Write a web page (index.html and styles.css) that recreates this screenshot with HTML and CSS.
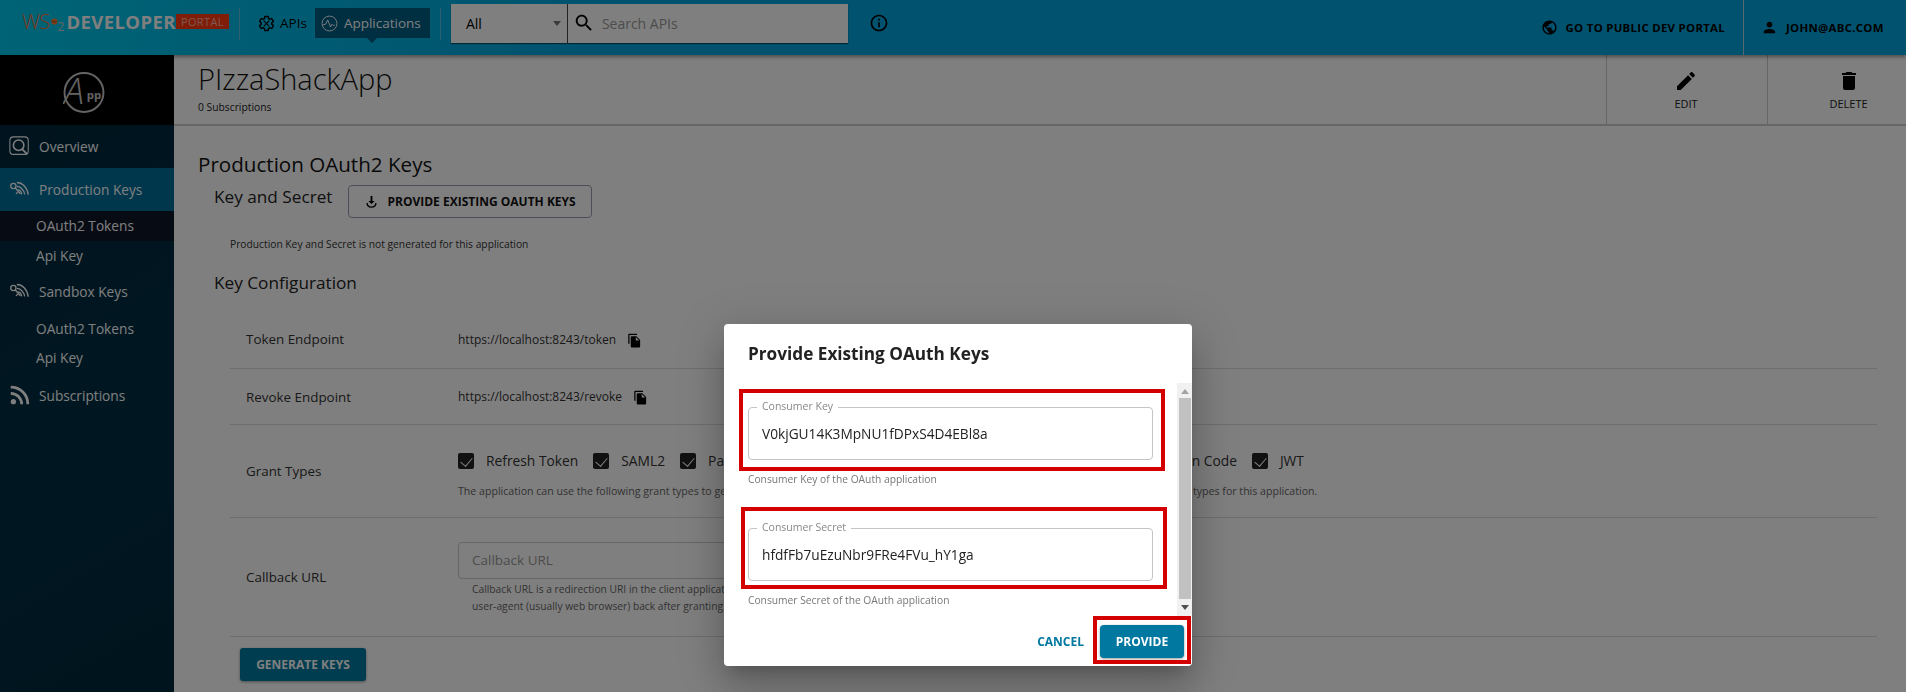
FILE: index.html
```html
<!DOCTYPE html>
<html lang="en">
<head>
    <meta charset="UTF-8">
    <title>PIzzaShackApp</title>
    <link rel="stylesheet" href="styles.css">
</head>
<body>
<header class="topbar">
    <div class="logo">
        <span class="logo-wso">WS</span>
        <svg class="logo-o" viewBox="0 0 20 20"><circle cx="10" cy="10" r="9" fill="#ff7a30"/><path d="M3 10.500h4l1.500-3 2.500 6 1.500-3h4.500" fill="none" stroke="#222" stroke-width="1"/></svg>
        <span class="logo-two">2</span>
        <span class="logo-dev">DEVELOPER</span>
        <span class="logo-portal">PORTAL</span>
    </div>
    <div class="top-sep"></div>
    <a class="nav-link">
        <svg class="nav-icon" viewBox="0 0 24 24"><path d="M19.430 12.980c.04-.32.07-.64.07-.98s-.03-.66-.07-.98l2.110-1.650c.19-.15.24-.42.12-.64l-2-3.460c-.12-.22-.39-.3-.61-.22l-2.490 1c-.52-.4-1.080-.73-1.690-.98l-.38-2.650C14.460 2.180 14.250 2 14 2h-4c-.25 0-.46.18-.49.42l-.38 2.650c-.61.25-1.170.59-1.690.98l-2.490-1c-.23-.09-.49 0-.61.22l-2 3.460c-.13.22-.07.49.12.64l2.110 1.650c-.04.32-.07.65-.07.98s.03.66.07.98l-2.110 1.650c-.19.15-.24.42-.12.64l2 3.460c.12.22.39.3.61.22l2.490-1c.52.4 1.080.73 1.690.98l.38 2.650c.03.24.24.42.49.42h4c.25 0 .46-.18.49-.42l.38-2.650c.61-.25 1.170-.59 1.690-.98l2.490 1c.23.09.49 0 .61-.22l2-3.460c.12-.22.07-.49-.12-.64l-2.110-1.650z" fill="none" stroke="#000" stroke-width="2"/><path d="M8 8l8 8M16 8l-8 8" stroke="#000" stroke-width="1.500"/></svg>
        APIs
    </a>
    <a class="nav-link nav-active">
        <svg class="nav-icon" viewBox="0 0 24 24"><circle cx="12" cy="12" r="10.500" fill="none" stroke="#fff" stroke-width="1.300"/><path d="M2.500 14l4-1 3-6 4 10 2-4 2 2 2-1" fill="none" stroke="#fff" stroke-width="1.300"/></svg>
        Applications
    </a>
    <div class="top-sep top-sep-right"></div>
    <div class="search">
        <div class="search-select">All<span class="caret"></span></div>
        <div class="search-input">
            <svg class="search-icon" viewBox="0 0 24 24"><path d="M15.500 14h-.79l-.28-.27C15.410 12.590 16 11.110 16 9.500 16 5.910 13.090 3 9.500 3S3 5.910 3 9.500 5.910 16 9.500 16c1.610 0 3.090-.59 4.230-1.570l.27.28v.79l5 4.990L20.490 19l-4.990-5zm-6 0C7.010 14 5 11.990 5 9.500S7.010 5 9.500 5 14 7.010 14 9.500 11.990 14 9.500 14z"/></svg>
            <span class="search-placeholder">Search APIs</span>
        </div>
    </div>
    <svg class="info-icon" viewBox="0 0 24 24"><path d="M11 7h2v2h-2zm0 4h2v6h-2zm1-9C6.480 2 2 6.480 2 12s4.480 10 10 10 10-4.480 10-10S17.520 2 12 2zm0 18c-4.410 0-8-3.590-8-8s3.590-8 8-8 8 3.590 8 8-3.590 8-8 8z"/></svg>
    <a class="top-action top-public">
        <svg class="top-action-icon" viewBox="0 0 24 24"><path d="M12 2C6.480 2 2 6.480 2 12s4.480 10 10 10 10-4.480 10-10S17.520 2 12 2zm-1 17.930c-3.950-.49-7-3.850-7-7.930 0-.62.08-1.210.21-1.790L9 15v1c0 1.100.9 2 2 2v1.930zm6.900-2.540c-.26-.81-1-1.390-1.900-1.390h-1v-3c0-.55-.45-1-1-1H8v-2h2c.55 0 1-.45 1-1V7h2c1.100 0 2-.9 2-2v-.41c2.930 1.190 5 4.060 5 7.410 0 2.080-.8 3.970-2.100 5.390z"/></svg>
        GO TO PUBLIC DEV PORTAL
    </a>
    <a class="top-action top-user">
        <svg class="top-action-icon" viewBox="0 0 24 24"><path d="M12 12c2.210 0 4-1.790 4-4s-1.790-4-4-4-4 1.790-4 4 1.790 4 4 4zm0 2c-2.670 0-8 1.340-8 4v2h16v-2c0-2.660-5.330-4-8-4z"/></svg>
        JOHN@ABC.COM
    </a>
</header>

<div class="layout">
    <aside class="sidebar">
        <div class="avatar">
            <svg class="avatar-svg" viewBox="0 -8 44 60"><circle cx="22" cy="22" r="20.500" fill="none" stroke="#c8c8c8" stroke-width="2"/><text x="1" y="34" class="avatar-a">A</text><text x="25" y="29" class="avatar-pp">pp</text></svg>
        </div>
        <a class="side-item side-overview">
            <svg class="side-icon" viewBox="0 0 24 24"><rect x="1" y="1" width="21" height="20" rx="4" fill="none" stroke="#fff" stroke-width="1.200"/><circle cx="11" cy="10.500" r="6" fill="none" stroke="#fff" stroke-width="1.800"/><path d="M15 15l6 6" stroke="#fff" stroke-width="2"/></svg>
            Overview
        </a>
        <a class="side-item side-active">
            <svg class="side-icon" viewBox="0 0 24 24"><circle cx="5" cy="8" r="3" fill="none" stroke="#fff" stroke-width="1.500"/><path d="M7 10l6 7M10 15l-2 2" stroke="#fff" stroke-width="1.600"/><path d="M9 4c6 0 12 5 13 14M9 8.500c4 0 8 4 9 9M10 12.500c2 0 4 2 4.500 5" fill="none" stroke="#fff" stroke-width="1.500"/></svg>
            Production Keys
        </a>
        <a class="side-sub side-sub-active">OAuth2 Tokens</a>
        <a class="side-sub">Api Key</a>
        <a class="side-item side-sandbox">
            <svg class="side-icon" viewBox="0 0 24 24"><circle cx="5" cy="8" r="3" fill="none" stroke="#fff" stroke-width="1.500"/><path d="M7 10l6 7M10 15l-2 2" stroke="#fff" stroke-width="1.600"/><path d="M9 4c6 0 12 5 13 14M9 8.500c4 0 8 4 9 9M10 12.500c2 0 4 2 4.500 5" fill="none" stroke="#fff" stroke-width="1.500"/></svg>
            Sandbox Keys
        </a>
        <a class="side-sub side-sub-tall">OAuth2 Tokens</a>
        <a class="side-sub side-sub-short">Api Key</a>
        <a class="side-item side-subs">
            <svg class="side-icon" viewBox="0 0 24 24"><circle cx="5" cy="19" r="3"/><path d="M2 2.500c11 0 19.500 8.500 19.500 19.500M2 9.500c7 0 12.500 5.500 12.500 12.500" fill="none" stroke="#fff" stroke-width="3.200"/></svg>
            Subscriptions
        </a>
    </aside>

    <main class="main">
        <div class="title-bar">
            <div class="title-text">
                <h1 class="app-name">PIzzaShackApp</h1>
                <div class="app-subs">0 Subscriptions</div>
            </div>
            <a class="title-action">
                <svg class="title-icon" viewBox="0 0 24 24"><path d="M3 17.250V21h3.750L17.810 9.940l-3.750-3.750L3 17.250zM20.710 7.040c.39-.39.39-1.020 0-1.410l-2.340-2.340c-.39-.39-1.020-.39-1.410 0l-1.830 1.830 3.750 3.750 1.830-1.830z"/></svg>
                EDIT
            </a>
            <a class="title-action title-delete">
                <svg class="title-icon" viewBox="0 0 24 24"><path d="M6 19c0 1.100.9 2 2 2h8c1.100 0 2-.9 2-2V7H6v12zM19 4h-3.500l-1-1h-5l-1 1H5v2h14V4z"/></svg>
                DELETE
            </a>
        </div>

        <div class="content">
            <h2 class="page-heading">Production OAuth2 Keys</h2>
            <div class="key-head">
                <h3 class="sub-heading">Key and Secret</h3>
                <a class="outline-btn">
                    <svg class="outline-btn-icon" viewBox="0 0 24 24"><path d="M10.500 3h3v8h3.500L12 16 7 11h3.500z"/><path d="M5 14.500c0 4 3 6.500 7 6.500s7-2.500 7-6.500" fill="none" stroke="#000" stroke-width="2.200"/></svg>
                    PROVIDE EXISTING OAUTH KEYS
                </a>
            </div>
            <p class="key-note">Production Key and Secret is not generated for this application</p>
            <h3 class="sub-heading config-heading">Key Configuration</h3>

            <div class="config-row row-token">
                <div class="row-label">Token Endpoint</div>
                <div class="row-value">https://localhost:8243/token
                    <svg class="copy-icon" viewBox="0 0 24 24"><path d="M16 1H4c-1.100 0-2 .9-2 2v14h2V3h12V1zm-1 4l6 6v10c0 1.100-.9 2-2 2H7.990C6.890 23 6 22.100 6 21l.01-14c0-1.100.89-2 1.990-2h7zm-1 7h5.500L14 6.500V12z"/></svg>
                </div>
            </div>
            <div class="config-row row-revoke">
                <div class="row-label">Revoke Endpoint</div>
                <div class="row-value">https://localhost:8243/revoke
                    <svg class="copy-icon" viewBox="0 0 24 24"><path d="M16 1H4c-1.100 0-2 .9-2 2v14h2V3h12V1zm-1 4l6 6v10c0 1.100-.9 2-2 2H7.990C6.890 23 6 22.100 6 21l.01-14c0-1.100.89-2 1.990-2h7zm-1 7h5.500L14 6.500V12z"/></svg>
                </div>
            </div>
            <div class="config-row row-grants">
                <div class="row-label">Grant Types</div>
                <div class="grant-cell">
                    <div class="grant-list">
                        <label class="grant"><span class="check"></span>Refresh Token</label>
                        <label class="grant"><span class="check"></span>SAML2</label>
                        <label class="grant"><span class="check"></span>Password</label>
                        <label class="grant"><span class="check"></span>Client Credentials</label>
                        <label class="grant"><span class="check"></span>IWA-NTLM</label>
                        <label class="grant"><span class="check"></span>Authorization Code</label>
                        <label class="grant"><span class="check"></span>JWT</label>
                    </div>
                    <p class="hint">The application can use the following grant types to generate Access Tokens. Based on the application requirements, you can enable or disable grant types for this application.</p>
                </div>
            </div>
            <div class="config-row row-callback">
                <div class="row-label">Callback URL</div>
                <div>
                    <div class="callback-input">Callback URL</div>
                    <p class="hint callback-hint">Callback URL is a redirection URI in the client application which is used by the authorization server to send the client's<br>user-agent (usually web browser) back after granting access.</p>
                </div>
            </div>
            <a class="generate-btn">GENERATE KEYS</a>
        </div>
    </main>
</div>

<div class="backdrop"></div>

<div class="modal">
    <h2 class="modal-title">Provide Existing OAuth Keys</h2>
    <div class="modal-body">
        <div class="modal-fields">
            <div class="field">
                <div class="field-box">
                    <span class="field-label">Consumer Key</span>
                    V0kjGU14K3MpNU1fDPxS4D4EBl8a
                </div>
                <div class="mark mark-key"></div>
                <p class="field-help">Consumer Key of the OAuth application</p>
            </div>
            <div class="field">
                <div class="field-box">
                    <span class="field-label">Consumer Secret</span>
                    hfdfFb7uEzuNbr9FRe4FVu_hY1ga
                </div>
                <div class="mark mark-secret"></div>
                <p class="field-help">Consumer Secret of the OAuth application</p>
            </div>
        </div>
        <div class="scrollbar">
            <span class="scroll-up"></span>
            <span class="scroll-thumb"></span>
            <span class="scroll-down"></span>
        </div>
    </div>
    <div class="modal-actions">
        <a class="cancel-btn">CANCEL</a>
        <a class="provide-btn">PROVIDE<span class="mark mark-provide"></span></a>
    </div>
</div>
</body>
</html>
```

FILE: styles.css
```css
* {
    margin: 0;
    padding: 0;
    box-sizing: border-box;
}

html, body {
    height: 692px;
    overflow: hidden;
}

body {
    font-family: "Open Sans", "Liberation Sans", sans-serif;
    color: #222222;
    background: #ffffff;
}

/* top bar */
.topbar {
    display: flex;
    align-items: center;
    height: 55px;
    padding-left: 22px;
    background: linear-gradient(100deg, #00c8ec 0%, #00a4dc 32%);
    box-shadow: 0 2px 4px rgba(0, 0, 0, .4);
    color: #000000;
    position: relative;
}

.logo {
    display: flex;
    align-items: center;
    width: 207px;
    height: 20px;
    margin-top: -12px;
}

.logo-wso {
    font-size: 20px;
    font-weight: 300;
    color: #ff6a30;
    letter-spacing: -.5px;
}

.logo-o {
    width: 15px;
    height: 15px;
    margin-left: 1px;
}

.logo-two {
    font-size: 12px;
    color: #cccccc;
    margin: 10px 2px 0 0;
}

.logo-dev {
    font-size: 18.500px;
    font-weight: 700;
    color: #ffffff;
    letter-spacing: .4px;
}

.logo-portal {
    background: #ff3a10;
    color: #ffb0a0;
    font-size: 11px;
    padding: 0 5px;
    line-height: 15px;
    flex: 1;
    text-align: center;
    letter-spacing: .4px;
}

.top-sep {
    width: 1px;
    height: 32px;
    margin: -8px 18px 0 10px;
    background: #9fc9d8;
    opacity: .6;
}

.top-sep-right {
    margin: -8px 10px 0 10px;
}

.nav-link {
    display: flex;
    align-items: center;
    gap: 5px;
    height: 30px;
    font-size: 13.500px;
    margin-top: -9px;
}

.nav-icon {
    width: 17px;
    height: 17px;
}

.nav-active {
    position: relative;
    width: 115px;
    margin-left: 8px;
    padding-left: 6px;
    gap: 6px;
    color: #ffffff;
    background: #005e84;
}

.nav-active::after {
    content: "";
    position: absolute;
    left: 50%;
    bottom: -5px;
    margin-left: -5px;
    border-left: 5px solid transparent;
    border-right: 5px solid transparent;
    border-top: 5px solid #005e84;
}

.search {
    display: flex;
    width: 397px;
    height: 39px;
    margin-top: -9px;
    background: #ffffff;
    box-shadow: 0 1px 1px rgba(0, 0, 0, .5);
}

.search-select {
    position: relative;
    width: 117px;
    padding-left: 15px;
    line-height: 39px;
    font-size: 14px;
    border-right: 1px solid #444444;
}

.caret {
    position: absolute;
    right: 6px;
    top: 17px;
    border-left: 4px solid transparent;
    border-right: 4px solid transparent;
    border-top: 5px solid #777777;
}

.search-input {
    display: flex;
    align-items: center;
    padding-left: 5px;
}

.search-icon {
    width: 22px;
    height: 22px;
    margin-right: 7px;
}

.search-placeholder {
    font-size: 14px;
    color: #999999;
}

.info-icon {
    width: 20px;
    height: 20px;
    margin: -9px 0 0 21px;
}

.top-action {
    display: flex;
    align-items: center;
    height: 55px;
    font-size: 11.400px;
    font-weight: 700;
    letter-spacing: .3px;
}

.top-action-icon {
    width: 17px;
    height: 17px;
    margin-right: 8px;
}

.top-public {
    margin-left: auto;
    padding-right: 18px;
    border-right: 1px solid #b0d0dc;
}

.top-user {
    width: 162px;
    padding-left: 17px;
}

/* sidebar */
.layout {
    display: flex;
    height: 637px;
}

.sidebar {
    width: 174px;
    flex-shrink: 0;
    background: linear-gradient(150deg, #00263a 0%, #002e44 60%, #00283a 100%);
    color: #ffffff;
    font-size: 13.700px;
}

.avatar {
    display: flex;
    align-items: center;
    justify-content: center;
    height: 70px;
    padding: 5px 6px 0 0;
    background: #000000;
}

.avatar-svg {
    width: 42px;
    height: 57px;
}

.avatar-a {
    font-size: 38px;
    font-weight: 300;
    font-style: italic;
    fill: #c8c8c8;
}

.avatar-pp {
    font-size: 12px;
    font-weight: 700;
    fill: #c8c8c8;
}

.side-item {
    display: flex;
    align-items: center;
    height: 43px;
    padding-left: 9px;
}

.side-icon {
    width: 21px;
    height: 21px;
    margin-right: 9px;
    fill: #ffffff;
}

.side-active {
    background: #006e9a;
}

.side-sandbox {
    height: 41px;
}

.side-sub {
    display: flex;
    align-items: center;
    height: 30px;
    padding: 0 0 2px 36px;
}

.side-sub-active {
    background: #0e1628;
}

.side-sub-tall {
    height: 34px;
}

.side-sub-short {
    height: 24px;
}

.side-subs {
    height: 50px;
}

/* title */
.main {
    flex: 1;
    min-width: 0;
}

.title-bar {
    display: flex;
    height: 71px;
    border-bottom: 2px solid #cccccc;
}

.title-text {
    flex: 1;
    padding: 4px 0 0 24px;
}

.app-name {
    font-size: 29px;
    font-weight: 300;
    line-height: 40px;
    color: #111111;
}

.app-subs {
    font-size: 10.300px;
    line-height: 15px;
    margin-top: 1px;
    color: #222222;
}

.title-action {
    display: flex;
    flex-direction: column;
    align-items: center;
    width: 161px;
    padding: 14px 2px 0 0;
    font-size: 11px;
    line-height: 14px;
    border-left: 1px solid #cccccc;
}

.title-delete {
    width: 139px;
    padding-left: 23px;
    padding-right: 0;
}

.title-icon {
    width: 24px;
    height: 24px;
    margin-bottom: 4px;
}

/* content */
.content {
    padding: 24px 29px 0 24px;
}

.page-heading {
    font-size: 20.600px;
    font-weight: 400;
    line-height: 28px;
    color: #111111;
}

.key-head {
    display: flex;
    align-items: flex-start;
    margin-top: 7px;
    padding-left: 16px;
}

.sub-heading {
    font-size: 17.200px;
    font-weight: 400;
    line-height: 24px;
    color: #222222;
}

.outline-btn {
    display: flex;
    align-items: center;
    width: 244px;
    height: 33px;
    margin-left: 16px;
    padding-left: 15px;
    border: 1px solid #999bb0;
    border-radius: 4px;
    font-size: 12px;
    font-weight: 700;
    color: #111111;
}

.outline-btn-icon {
    width: 15px;
    height: 15px;
    margin-right: 8px;
}

.key-note {
    margin-top: 19px;
    padding-left: 32px;
    font-size: 10.250px;
    line-height: 15px;
    color: #333333;
}

.config-heading {
    margin-top: 19px;
    padding-left: 16px;
}

.config-row {
    display: grid;
    grid-template-columns: 212px 1fr;
    align-items: center;
    margin-left: 32px;
    padding-left: 16px;
    border-bottom: 1px solid #dddddd;
    font-size: 13.400px;
    color: #333333;
}

.row-token {
    height: 74px;
    padding-top: 15px;
}

.row-revoke {
    height: 56px;
}

.row-grants {
    height: 93px;
}

.row-callback {
    height: 119px;
}

.row-value {
    display: flex;
    align-items: center;
    gap: 11px;
    font-size: 12px;
    white-space: nowrap;
}

.copy-icon {
    width: 15px;
    height: 15px;
    margin-top: 2px;
}

.grant-cell {
    padding-top: 10px;
}

.grant-list {
    display: flex;
    gap: 15px;
    font-size: 13.800px;
    white-space: nowrap;
}

.grant {
    display: flex;
    align-items: center;
    gap: 12px;
    line-height: 17px;
}

.grant:nth-child(5) {
    margin-right: 33px;
}

.check {
    position: relative;
    width: 16px;
    height: 16px;
    background: #222222;
    border-radius: 2px;
}

.check::after {
    content: "";
    position: absolute;
    left: 5px;
    top: 2px;
    width: 6px;
    height: 10px;
    border-right: 1.500px solid #ffffff;
    border-bottom: 1.500px solid #ffffff;
    transform: rotate(40deg);
}

.hint {
    margin-top: 14px;
    font-size: 10.600px;
    line-height: 17px;
    color: #666666;
    white-space: nowrap;
}

.callback-input {
    width: 560px;
    height: 37px;
    line-height: 35px;
    padding-left: 13px;
    border: 1px solid #cccccc;
    border-radius: 4px;
    font-size: 13.500px;
    color: #999999;
    margin-top: 3px;
}

.callback-hint {
    margin-top: 2px;
    padding-left: 14px;
    font-size: 10.250px;
}

.generate-btn {
    display: block;
    width: 126px;
    height: 33px;
    margin: 11px 0 0 42px;
    line-height: 33px;
    text-align: center;
    background: #007aa0;
    border-radius: 3px;
    box-shadow: 0 1px 3px rgba(0, 0, 0, .4);
    font-size: 12px;
    font-weight: 700;
    color: #ffffff;
}

/* dialog */
.backdrop {
    position: fixed;
    inset: 0;
    background: rgba(0, 0, 0, .5);
}

.modal {
    position: absolute;
    left: 724px;
    top: 324px;
    width: 468px;
    height: 342px;
    display: flex;
    flex-direction: column;
    background: #ffffff;
    border-radius: 4px;
    box-shadow: 0 11px 15px -7px rgba(0, 0, 0, .2), 0 24px 38px 3px rgba(0, 0, 0, .14), 0 9px 46px 8px rgba(0, 0, 0, .12);
}

.modal-title {
    height: 59px;
    padding: 18px 0 0 24px;
    font-size: 17.200px;
    font-weight: 700;
    line-height: 24px;
    color: #222222;
}

.modal-body {
    display: flex;
    height: 233px;
}

.modal-fields {
    flex: 1;
    padding: 24px 24px 0 24px;
}

.field {
    position: relative;
    height: 121px;
}

.field-box {
    position: relative;
    height: 53px;
    line-height: 51px;
    padding-left: 13px;
    border: 1px solid #c4c4c4;
    border-radius: 4px;
    font-size: 13.700px;
    color: #222222;
}

.field-label {
    position: absolute;
    left: 8px;
    top: -9px;
    padding: 0 5px;
    background: #ffffff;
    font-size: 10.500px;
    line-height: 15px;
    color: #888888;
}

.field-help {
    margin-top: 11px;
    font-size: 10.250px;
    line-height: 17px;
    color: #777777;
}

.mark {
    position: absolute;
    border: 4px solid #d40000;
}

.mark-key {
    left: -9px;
    top: -18px;
    width: 426px;
    height: 82px;
}

.mark-secret {
    left: -7px;
    top: -21px;
    width: 426px;
    height: 82px;
}

.scrollbar {
    display: flex;
    flex-direction: column;
    align-items: center;
    width: 15px;
    background: #f1f1f1;
}

.scroll-up {
    margin-top: 6px;
    border-left: 4px solid transparent;
    border-right: 4px solid transparent;
    border-bottom: 5px solid #a3a3a3;
}

.scroll-thumb {
    width: 12px;
    height: 201px;
    margin: 4px 0 6px;
    background: #c1c1c1;
}

.scroll-down {
    border-left: 4px solid transparent;
    border-right: 4px solid transparent;
    border-top: 5px solid #505050;
}

.modal-actions {
    display: flex;
    justify-content: flex-end;
    align-items: center;
    height: 50px;
    padding: 0 8px 0 0;
}

.cancel-btn {
    margin-right: 16px;
    font-size: 12px;
    font-weight: 700;
    color: #0078a0;
}

.provide-btn {
    position: relative;
    width: 84px;
    height: 33px;
    line-height: 33px;
    text-align: center;
    background: #0078a0;
    border-radius: 4px;
    box-shadow: 0 1px 3px rgba(0, 0, 0, .4);
    font-size: 12px;
    font-weight: 700;
    color: #ffffff;
}

.mark-provide {
    left: -7px;
    top: -9px;
    width: 98px;
    height: 48px;
}
```
